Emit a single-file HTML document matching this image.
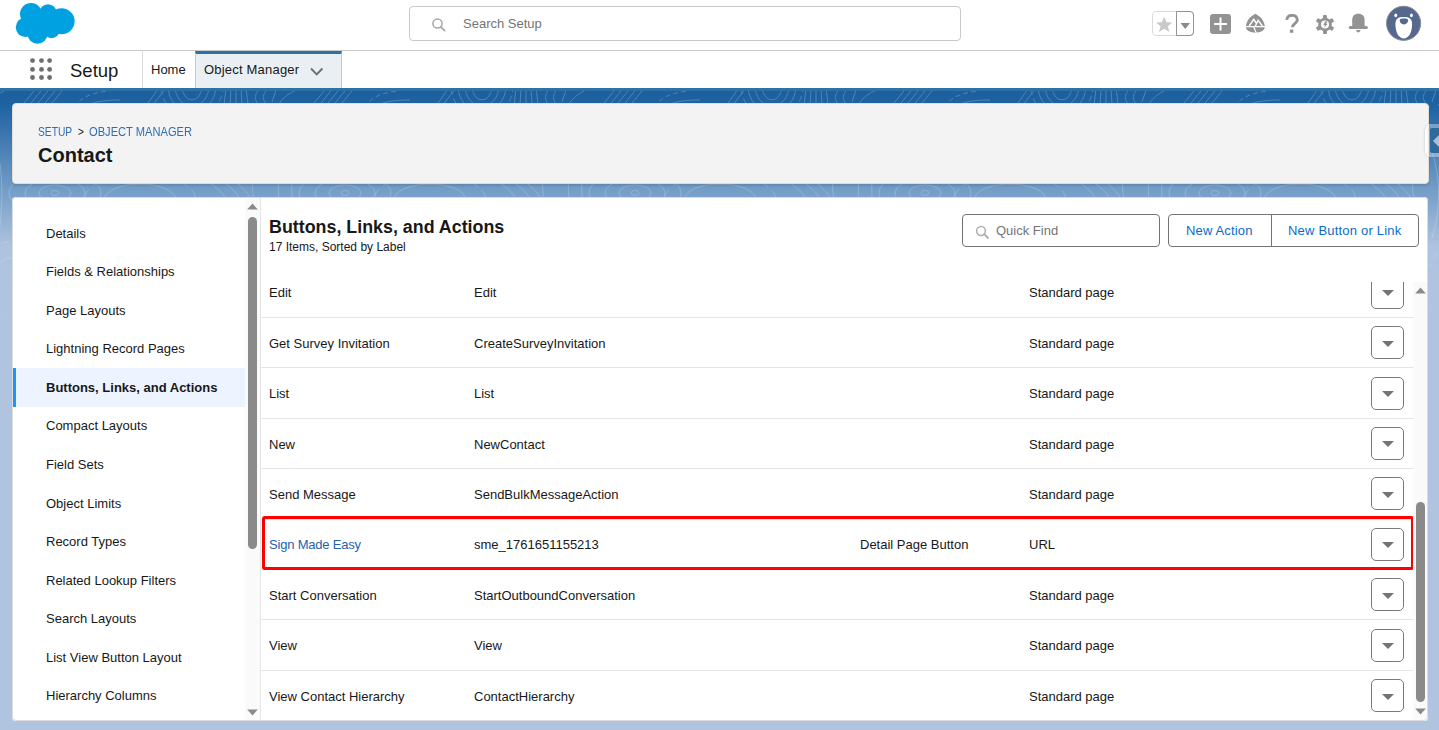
<!DOCTYPE html>
<html><head><meta charset="utf-8">
<style>
*{box-sizing:border-box;margin:0;padding:0}
html,body{width:1439px;height:730px;overflow:hidden;background:#b0c4df;font-family:"Liberation Sans",sans-serif;color:#181818;font-size:13px}
.abs{position:absolute}
#hdr{left:0;top:0;width:1439px;height:51px;background:#fff;border-bottom:1px solid #c9c9c9}
#nav{left:0;top:51px;width:1439px;height:37px;background:#fff}
#band{left:0;top:88px;width:1439px;height:642px;background:#b0c4df}
#bandtop{left:0;top:88px;width:1439px;height:200px;background:linear-gradient(to bottom,#1c5f9f 3px,rgb(31,99,163) 18px,rgb(173,195,223) 158px,#b0c4df 200px)}
#navline{left:0;top:88px;width:1439px;height:3px;background:#2c72a3}
.card{background:#fff;border-radius:4px}
#hcard{left:12px;top:103px;width:1417px;height:81px;background:#f3f3f3;border-radius:4px;border:1px solid #e2ddd6;box-shadow:0 2px 2px rgba(0,0,0,.10)}
#bcard{left:12px;top:197px;width:1416px;height:524px;background:#fff;border-radius:4px;overflow:hidden}
.side{left:0;top:0;width:248px;height:524px}
.sitem{position:absolute;left:34px;font-size:13px;line-height:16px;white-space:nowrap}
.t{position:absolute;white-space:nowrap;font-size:13px;line-height:16px}
.sep{position:absolute;left:249px;width:1152px;height:1px;background:#e5e5e5}
.mbtn{position:absolute;left:1359px;width:33px;height:33px;border:1px solid #7a7a7a;border-radius:5px;background:#fff}
.mbtn:after{content:"";position:absolute;left:10px;top:13.5px;border-left:6px solid transparent;border-right:6px solid transparent;border-top:6.5px solid #747474}
</style></head>
<body>
<div id="hdr" class="abs">
<svg class="abs" style="left:0;top:0" width="90" height="50" viewBox="0 0 90 50">
<g fill="#00a1e0">
<circle cx="31" cy="14" r="11"/>
<circle cx="48" cy="13" r="8.7"/>
<circle cx="61.6" cy="21.3" r="13"/>
<circle cx="25.6" cy="27.3" r="9.8"/>
<circle cx="37.5" cy="33.5" r="10.2"/>
<circle cx="51.5" cy="30" r="8.3"/>
<rect x="24" y="14" width="40" height="20"/>
</g></svg>
<div class="abs" style="left:409px;top:6px;width:552px;height:35px;border:1px solid #c9c9c9;border-radius:4px;background:#fff"></div>
<svg class="abs" style="left:430.5px;top:17px" width="16" height="16" viewBox="0 0 16 16"><circle cx="6.5" cy="6.5" r="4.6" fill="none" stroke="#a8a8a8" stroke-width="1.5"/><line x1="9.8" y1="9.8" x2="13.6" y2="13.6" stroke="#a8a8a8" stroke-width="1.8" stroke-linecap="round"/></svg>
<div class="t" style="left:463px;top:15.6px;color:#747474;font-size:13px">Search Setup</div>
<div class="abs" style="left:1152px;top:11px;width:42px;height:25px;border:1px solid #dddbda;border-radius:4px"></div>
<div class="abs" style="left:1176px;top:11px;width:18px;height:25px;border:1px solid #939393;border-radius:0 4px 4px 0"></div>
<svg class="abs" style="left:1155px;top:16px" width="18" height="17" viewBox="0 0 18 17"><polygon points="9.2,0.8 11.5,6.3 17.4,6.5 12.8,10.2 14.5,16 9.2,12.7 3.9,16 5.6,10.2 1,6.5 6.9,6.3" fill="#c9c9c9"/></svg>
<svg class="abs" style="left:1180px;top:23px" width="11" height="7" viewBox="0 0 11 7"><polygon points="0.5,0 10,0 5.25,6" fill="#8a8a8a"/></svg>
<svg class="abs" style="left:1210px;top:14px" width="21" height="20" viewBox="0 0 21 20"><rect x="0" y="0" width="21" height="20" rx="3" fill="#939393"/><rect x="9.5" y="3.5" width="2" height="13" fill="#fff"/><rect x="4" y="9" width="13" height="2" fill="#fff"/></svg>
<svg class="abs" style="left:1245px;top:13px" width="21" height="21" viewBox="0 0 21 21"><path d="M10.4 0.7 C4.8 3.6 1.4 8 0.9 12.9 L19.75 12.9 C19.2 8 15.9 3.6 10.4 0.7Z" fill="#939393"/><path d="M0.9 14.3 L19.75 14.3 C19.5 17.6 15.2 19.7 10.4 19.75 C5.6 19.7 1.2 17.6 0.9 14.3Z" fill="#939393"/><path d="M4.2 13 L8.76 6.3 L11.4 10.4 M10.4 13 L13.1 7.3 L17.4 13" fill="none" stroke="#fff" stroke-width="1.4"/><path d="M8.8 14 L9.9 16.8 L11.3 20" fill="none" stroke="#fff" stroke-width="1.2"/></svg>
<svg class="abs" style="left:1285px;top:14px" width="14" height="20" viewBox="0 0 14 20"><path d="M1.8 5.8 C2 2.9 4.3 1.2 7 1.2 C9.9 1.2 12.3 3 12.3 6 C12.3 9.2 8.3 9.6 7.6 12.3 L7.6 13.2" fill="none" stroke="#939393" stroke-width="2.9"/><rect x="4.9" y="15.6" width="3.4" height="3.2" rx=".5" fill="#939393"/></svg>
<svg class="abs" style="left:1315px;top:14px" width="20" height="21" viewBox="0 0 20 21"><g fill="#939393"><circle cx="10" cy="10.5" r="6.8"/><rect x="8" y="1" width="4" height="4" rx="1"/><rect x="8" y="16" width="4" height="4" rx="1"/><rect x="8" y="1" width="4" height="4" rx="1" transform="rotate(60 10 10.5)"/><rect x="8" y="16" width="4" height="4" rx="1" transform="rotate(60 10 10.5)"/><rect x="8" y="1" width="4" height="4" rx="1" transform="rotate(120 10 10.5)"/><rect x="8" y="16" width="4" height="4" rx="1" transform="rotate(120 10 10.5)"/></g><circle cx="10" cy="10.5" r="4" fill="#fff"/><path d="M10.4 7.2 L12.4 7.2 L11 9.7 L12.8 9.7 L9 13.8 L10 11 L8.2 11 Z" fill="#939393"/></svg>
<svg class="abs" style="left:1348px;top:13px" width="21" height="21" viewBox="0 0 21 21"><path d="M4.2 13.5 L4.2 6.8 C4.2 2.9 6.4 0.75 10.3 0.75 C14.2 0.75 16.6 2.9 16.6 6.8 L16.6 13.5 Z" fill="#939393"/><rect x="0.75" y="12.9" width="19.1" height="3.1" rx="1.5" fill="#939393"/><path d="M8 17 L12.6 17 C12.2 18.7 11.2 19.4 10.3 19.4 C9.4 19.4 8.4 18.7 8 17Z" fill="#939393"/></svg>
<svg class="abs" style="left:1385px;top:5px" width="37" height="37" viewBox="0 0 37 37"><circle cx="18.6" cy="18.3" r="17.1" fill="#54698d" stroke="#8a8f96" stroke-width="1"/><path d="M18.75 11.9 C24.2 11.9 27.1 13.6 27.1 19 C27.1 27.5 23.8 33.4 18.75 33.4 C13.7 33.4 10.4 27.5 10.4 19 C10.4 13.6 13.3 11.9 18.75 11.9Z" fill="#fff"/><ellipse cx="10.8" cy="10.3" rx="1.4" ry="1.9" fill="#fff"/><ellipse cx="26.4" cy="10.3" rx="1.4" ry="1.9" fill="#fff"/><path d="M14.7 15.2 C14.7 13.8 17 13.6 18.9 13.6 C20.8 13.6 23.1 13.8 23.1 15.2 C23.1 17.6 20.8 19.4 18.9 19.4 C17 19.4 14.7 17.6 14.7 15.2Z" fill="#54698d"/></svg>
</div>
<div id="nav" class="abs">
<svg class="abs" style="left:28px;top:5px" width="26" height="26" viewBox="0 0 26 26"><g fill="#706e6b">
<circle cx="4.5" cy="4.6" r="2.4"/><circle cx="13.5" cy="4.6" r="2.4"/><circle cx="21.6" cy="4.6" r="2.4"/>
<circle cx="4.5" cy="13.4" r="2.4"/><circle cx="13.5" cy="13.4" r="2.4"/><circle cx="21.6" cy="13.4" r="2.4"/>
<circle cx="4.5" cy="21.5" r="2.4"/><circle cx="13.5" cy="21.5" r="2.4"/><circle cx="21.6" cy="21.5" r="2.4"/>
</g></svg>
<div class="t" style="left:70px;top:9px;font-size:18.5px;line-height:22px;color:#181818">Setup</div>
<div class="abs" style="left:142px;top:0;width:1px;height:37px;background:#dddbda"></div>
<div class="t" style="left:151px;top:11px;font-size:13px;color:#181818">Home</div>
<div class="abs" style="left:195px;top:0;width:147px;height:37px;background:#e9eff3;border-left:1px solid #c9c9c9;border-right:1px solid #c9c9c9;border-top:3px solid #2c72a3"></div>
<div class="t" style="left:204px;top:11px;font-size:13px;letter-spacing:.2px;color:#181818">Object Manager</div>
<svg class="abs" style="left:309.5px;top:15.5px" width="14" height="9" viewBox="0 0 14 9"><path d="M1 1.5 L6.7 7.3 L12.4 1.5" fill="none" stroke="#706e6b" stroke-width="1.9"/></svg>
</div>
<div id="band" class="abs"></div>
<div id="bandtop" class="abs"></div>
<svg class="abs" style="left:0;top:88px" width="1439" height="250" viewBox="0 0 1439 250">
<defs>
<linearGradient id="fade" x1="0" y1="0" x2="0" y2="1"><stop offset="0" stop-color="#fff" stop-opacity="1"/><stop offset=".6" stop-color="#fff" stop-opacity=".9"/><stop offset="1" stop-color="#fff" stop-opacity="0"/></linearGradient>
<mask id="m"><rect width="1439" height="250" fill="url(#fade)"/></mask>
<pattern id="topo" x="-20" y="0" width="290" height="250" patternUnits="userSpaceOnUse">
<g fill="none" stroke="#fff" stroke-width="1">
<ellipse cx="212" cy="-2" rx="10" ry="14"/><ellipse cx="212" cy="-2" rx="17" ry="20"/><ellipse cx="212" cy="-2" rx="24" ry="26"/><ellipse cx="212" cy="-2" rx="31" ry="32" stroke-dasharray="6 4"/>
<path d="M166 18 L180 -2 M172 18 L186 0"/>
<path d="M244 18 L246 0 M250 18 L251 0 M256 18 L256 0 M262 17 L261 0 M268 16 L266 0"/>
<path d="M282 20 C272 12 274 4 284 -2 M290 20 C280 12 282 4 292 -2"/>
<path d="M40 20 L58 -2 M47 20 L65 -2 M54 20 L72 -2 M61 20 L79 -2 M68 20 L86 -2"/>
<path d="M95 20 C99 10 110 5 128 3" stroke-dasharray="5 3"/>
<path d="M100 22 C110 14 122 12 140 12"/>
<path d="M8 18 C12 10 18 6 26 2 M2 14 L6 2"/>
<ellipse cx="75" cy="105" rx="4" ry="2.5"/><ellipse cx="75" cy="105" rx="16" ry="8"/><ellipse cx="75" cy="105" rx="30" ry="14"/><ellipse cx="75" cy="105" rx="46" ry="22"/>
<ellipse cx="160" cy="112" rx="36" ry="16"/><ellipse cx="160" cy="112" rx="56" ry="26" stroke-dasharray="10 5"/>
<path d="M222 90 C240 100 250 112 252 125 M232 88 C250 96 262 108 266 124 M242 86 C262 96 272 108 278 124"/>
<path d="M0 60 C10 80 12 120 2 150 M10 40 C24 70 26 120 14 170" />
<path d="M280 40 C270 70 268 110 284 150"/>
<ellipse cx="30" cy="200" rx="18" ry="30"/><ellipse cx="30" cy="200" rx="34" ry="46" stroke-dasharray="8 4"/>
<path d="M120 170 C150 160 200 180 240 220 M130 190 C160 180 190 200 220 240"/>
</g>
</pattern>
</defs>
<rect width="1439" height="250" fill="url(#topo)" opacity=".22" mask="url(#m)"/>
</svg>
<div id="navline" class="abs"></div>
<div id="hcard" class="abs">
<div class="t" style="left:25px;top:20.8px;font-size:12.5px;line-height:14px;color:#2e6db3;transform:scaleX(.82);transform-origin:0 0">SETUP</div><div class="t" style="left:64.5px;top:20.8px;font-size:12.5px;line-height:14px;color:#181818;transform:scaleX(.82);transform-origin:0 0">&gt;</div><div class="t" style="left:76px;top:20.8px;font-size:12.5px;line-height:14px;color:#2e6db3;transform:scaleX(.89);transform-origin:0 0">OBJECT MANAGER</div>
<div class="t" style="left:25px;top:39px;font-size:20px;line-height:24px;font-weight:bold;color:#181818">Contact</div>
</div>
<div class="abs" style="left:1425px;top:124px;width:30px;height:33px;border-radius:7px;background:rgba(255,255,255,.35);border-left:2px solid rgba(255,255,255,.9);box-shadow:-1px 0 2px rgba(0,0,0,.1)"></div>
<div class="abs" style="left:1430px;top:128px;width:12px;height:25px;background:#2e6a9b;border-radius:2px"></div>
<svg class="abs" style="left:1433px;top:135px" width="6" height="12" viewBox="0 0 6 12"><polygon points="0,6 6,0 6,12" fill="#a7bfdc"/></svg>
<div id="bcard" class="abs">
<div class="abs" style="left:0;top:171.1px;width:233px;height:38.5px;background:#eef4ff;border-left:4px solid #1b96ff"></div>
<div class="sitem" style="top:28.60px;">Details</div>
<div class="sitem" style="top:67.16px;">Fields &amp; Relationships</div>
<div class="sitem" style="top:105.72px;">Page Layouts</div>
<div class="sitem" style="top:144.28px;">Lightning Record Pages</div>
<div class="sitem" style="top:182.84px;font-weight:bold;">Buttons, Links, and Actions</div>
<div class="sitem" style="top:221.40px;">Compact Layouts</div>
<div class="sitem" style="top:259.96px;">Field Sets</div>
<div class="sitem" style="top:298.52px;">Object Limits</div>
<div class="sitem" style="top:337.08px;">Record Types</div>
<div class="sitem" style="top:375.64px;">Related Lookup Filters</div>
<div class="sitem" style="top:414.20px;">Search Layouts</div>
<div class="sitem" style="top:452.76px;">List View Button Layout</div>
<div class="sitem" style="top:491.32px;">Hierarchy Columns</div>
<div class="abs" style="left:233px;top:0;width:15px;height:524px;background:#fafafa"></div>
<svg class="abs" style="left:235px;top:5.5px" width="11" height="7" viewBox="0 0 11 7"><polygon points="5.5,0.5 10.8,6.5 0.2,6.5" fill="#8a8a8a"/></svg>
<div class="abs" style="left:236px;top:20px;width:9px;height:331.5px;background:#8a8a8a;border-radius:4.5px"></div>
<svg class="abs" style="left:235px;top:512px" width="11" height="7" viewBox="0 0 11 7"><polygon points="0.2,0.5 10.8,0.5 5.5,6.5" fill="#8a8a8a"/></svg>
<div class="abs" style="left:248px;top:0;width:1px;height:524px;background:#e5e5e5"></div>
<div class="t" style="left:257px;top:19.2px;font-size:17.85px;line-height:22px;font-weight:bold;color:#181818">Buttons, Links, and Actions</div>
<div class="t" style="left:257px;top:43px;font-size:12px;line-height:14px;color:#181818">17 Items, Sorted by Label</div>
<div class="abs" style="left:950px;top:17px;width:198px;height:33px;border:1px solid #747474;border-radius:4px;background:#fff"></div>
<svg class="abs" style="left:963px;top:28px" width="15" height="15" viewBox="0 0 15 15"><circle cx="6" cy="6" r="4.4" fill="none" stroke="#aeaeae" stroke-width="1.5"/><line x1="9.2" y1="9.2" x2="13" y2="13" stroke="#aeaeae" stroke-width="1.8" stroke-linecap="round"/></svg>
<div class="t" style="left:984px;top:26px;color:#747474">Quick Find</div>
<div class="abs" style="left:1156px;top:17px;width:251px;height:33px;border:1px solid #747474;border-radius:4px;background:#fff"></div>
<div class="abs" style="left:1259px;top:17px;width:1px;height:33px;background:#747474"></div>
<div class="t" style="left:1174px;top:26px;color:#0b6bcb;letter-spacing:.15px">New Action</div>
<div class="t" style="left:1276px;top:26px;color:#0b6bcb;letter-spacing:.2px">New Button or Link</div>
<div class="abs" style="left:249px;top:85px;width:1153px;height:439px;overflow:hidden"><div class="t" style="left:8px;top:3.27px;">Edit</div><div class="t" style="left:213px;top:3.27px">Edit</div><div class="t" style="left:768px;top:3.27px">Standard page</div><div class="mbtn" style="left:1110px;top:-6.33px"></div><div class="abs" style="left:0;top:34.80px;width:1152px;height:1px;background:#e5e5e5"></div><div class="t" style="left:8px;top:53.70px;">Get Survey Invitation</div><div class="t" style="left:213px;top:53.70px">CreateSurveyInvitation</div><div class="t" style="left:768px;top:53.70px">Standard page</div><div class="mbtn" style="left:1110px;top:44.10px"></div><div class="abs" style="left:0;top:85.23px;width:1152px;height:1px;background:#e5e5e5"></div><div class="t" style="left:8px;top:104.13px;">List</div><div class="t" style="left:213px;top:104.13px">List</div><div class="t" style="left:768px;top:104.13px">Standard page</div><div class="mbtn" style="left:1110px;top:94.53px"></div><div class="abs" style="left:0;top:135.66px;width:1152px;height:1px;background:#e5e5e5"></div><div class="t" style="left:8px;top:154.56px;">New</div><div class="t" style="left:213px;top:154.56px">NewContact</div><div class="t" style="left:768px;top:154.56px">Standard page</div><div class="mbtn" style="left:1110px;top:144.96px"></div><div class="abs" style="left:0;top:186.09px;width:1152px;height:1px;background:#e5e5e5"></div><div class="t" style="left:8px;top:204.99px;">Send Message</div><div class="t" style="left:213px;top:204.99px">SendBulkMessageAction</div><div class="t" style="left:768px;top:204.99px">Standard page</div><div class="mbtn" style="left:1110px;top:195.39px"></div><div class="abs" style="left:0;top:236.52px;width:1152px;height:1px;background:#e5e5e5"></div><div class="t" style="left:8px;top:255.42px;color:#2363ae;letter-spacing:-.2px;">Sign Made Easy</div><div class="t" style="left:213px;top:255.42px">sme_1761651155213</div><div class="t" style="left:599px;top:255.42px">Detail Page Button</div><div class="t" style="left:768px;top:255.42px">URL</div><div class="mbtn" style="left:1110px;top:245.82px"></div><div class="abs" style="left:0;top:286.95px;width:1152px;height:1px;background:#e5e5e5"></div><div class="t" style="left:8px;top:305.85px;">Start Conversation</div><div class="t" style="left:213px;top:305.85px">StartOutboundConversation</div><div class="t" style="left:768px;top:305.85px">Standard page</div><div class="mbtn" style="left:1110px;top:296.25px"></div><div class="abs" style="left:0;top:337.38px;width:1152px;height:1px;background:#e5e5e5"></div><div class="t" style="left:8px;top:356.28px;">View</div><div class="t" style="left:213px;top:356.28px">View</div><div class="t" style="left:768px;top:356.28px">Standard page</div><div class="mbtn" style="left:1110px;top:346.68px"></div><div class="abs" style="left:0;top:387.81px;width:1152px;height:1px;background:#e5e5e5"></div><div class="t" style="left:8px;top:406.71px;">View Contact Hierarchy</div><div class="t" style="left:213px;top:406.71px">ContactHierarchy</div><div class="t" style="left:768px;top:406.71px">Standard page</div><div class="mbtn" style="left:1110px;top:397.11px"></div><div class="abs" style="left:1px;top:234.02px;width:1151.7px;height:53.6px;border:3.3px solid #ff0000;border-radius:3px"></div></div>
<div class="abs" style="left:1401px;top:85px;width:15px;height:439px;background:#fafafa"></div>
<svg class="abs" style="left:1403px;top:90px" width="11" height="7" viewBox="0 0 11 7"><polygon points="5.5,0.5 10.8,6.5 0.2,6.5" fill="#8a8a8a"/></svg>
<div class="abs" style="left:1404px;top:305px;width:9px;height:200px;background:#8a8a8a;border-radius:4.5px"></div>
<svg class="abs" style="left:1403px;top:511px" width="11" height="7" viewBox="0 0 11 7"><polygon points="0.2,0.5 10.8,0.5 5.5,6.5" fill="#8a8a8a"/></svg>
<div class="abs" style="left:0;top:0;width:1416px;height:524px;border:1px solid #dddbda;border-radius:4px"></div>
</div>
</body></html>
